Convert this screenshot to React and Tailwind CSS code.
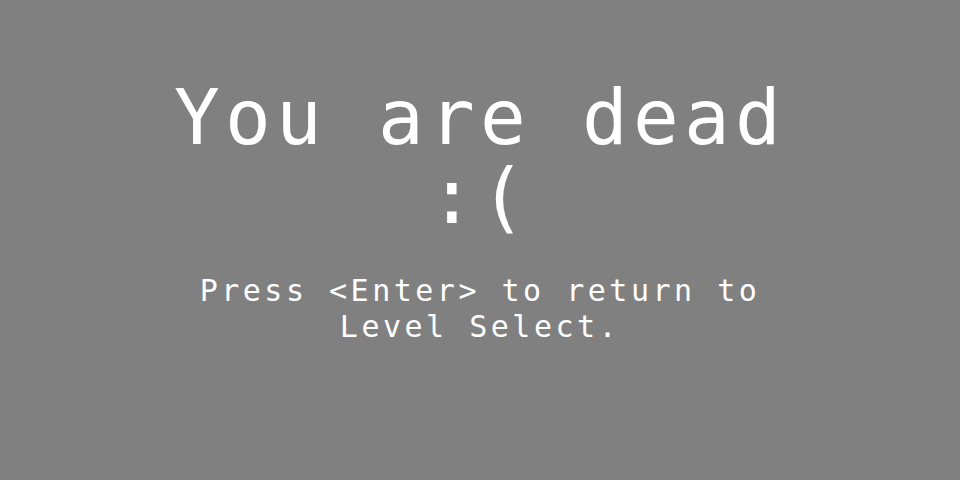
export default function App() {
  return (
    <div className="h-[480px] w-[960px] bg-[#808080] flex flex-col items-center text-white font-['DejaVu_Sans_Mono',monospace]">
      <h1 className="mt-[78px] text-[76px] leading-[79px] tracking-[5.25px] text-center font-normal">
        <div>You are dead</div>
        <div>:(</div>
      </h1>
      <div className="mt-[37px] text-[30px] leading-[36px] tracking-[3.5px] text-center">
        <div>Press &lt;Enter&gt; to return to</div>
        <div>Level Select.</div>
      </div>
    </div>
  );
}
